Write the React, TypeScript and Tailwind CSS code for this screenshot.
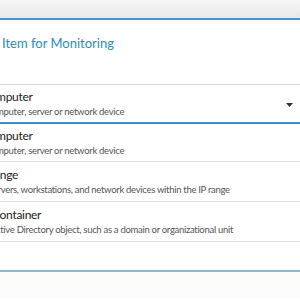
export default function App() {
  const font = { fontFamily: 'Lato, "Open Sans", sans-serif' };
  const t = "text-[12px] leading-[16px] text-[#222] tracking-[-0.3px]";
  const s = "text-[9.5px] leading-[14px] text-[#555] tracking-[-0.3px]";
  return (
    <div className="w-[300px] h-[300px] overflow-hidden bg-white relative" style={font}>
      <div className="h-[18px] bg-gradient-to-b from-[#f7f7f7] to-[#e9e9e9]" />
      <div className="h-[2px] bg-[#4f8fcc]" />
      <div className="h-[64px] flex items-start pt-[13px]">
        <span className="text-[13px] leading-[20px] text-[#2a8fb3] ml-[2px] whitespace-nowrap">Item for Monitoring</span>
      </div>
      <div className="h-px bg-[#c9dce4]" />
      <div className="h-[39px] border-b-2 border-[#3d8fd2] flex items-center overflow-hidden relative">
        <div className="flex flex-col whitespace-nowrap">
          <span className={`${t} ml-[-18px]`}>Computer</span>
          <span className={`${s} ml-[-15px]`}>Computer, server or network device</span>
        </div>
        <svg className="absolute left-[286px] top-[18px]" width="7" height="4" viewBox="0 0 7 4">
          <path d="M0 0 H7 L3.5 4 Z" fill="#333" />
        </svg>
      </div>
      <div className="h-[38px] border-b border-[#e3e3e3] flex items-center">
        <div className="flex flex-col whitespace-nowrap">
          <span className={`${t} ml-[-18px]`}>Computer</span>
          <span className={`${s} ml-[-15px]`}>Computer, server or network device</span>
        </div>
      </div>
      <div className="h-[40px] border-b border-[#e3e3e3] flex items-center">
        <div className="flex flex-col whitespace-nowrap">
          <span className={`${t} ml-[-13px]`}>Range</span>
          <span className={`${s} ml-[-12px]`}>Servers, workstations, and network devices within the IP range</span>
        </div>
      </div>
      <div className="h-[40px] border-b border-[#e3e3e3] flex items-center">
        <div className="flex flex-col whitespace-nowrap">
          <span className={`${t} ml-[-8px]`}>Container</span>
          <span className={`${s} ml-[-10px]`}>Active Directory object, such as a domain or organizational unit</span>
        </div>
      </div>
      <div className="h-[28px]" />
      <div className="h-[2px] bg-[#88b8d6]" />
      <div className="h-[26px] bg-[#fcfcfa]" />
    </div>
  );
}
